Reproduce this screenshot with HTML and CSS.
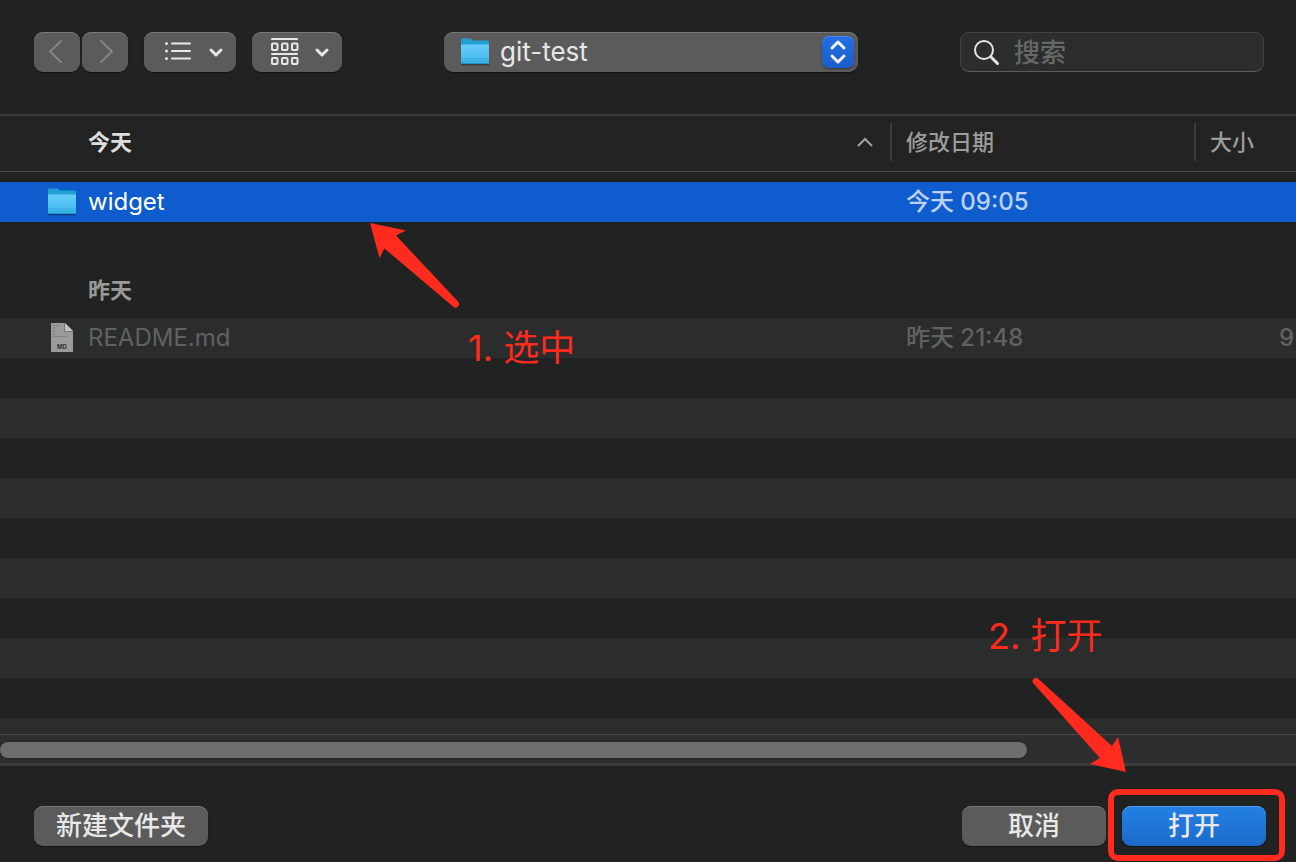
FILE: index.html
```html
<!DOCTYPE html>
<html lang="zh-CN">
<head>
<meta charset="utf-8">
<title>git-test</title>
<link rel="stylesheet" href="styles.css">
</head>
<body>
<svg class="defs" aria-hidden="true">
  <defs>
    <linearGradient id="front" x1="0" y1="0" x2="0" y2="1"><stop offset="0" stop-color="#68cdfb"/><stop offset="1" stop-color="#3fb6ec"/></linearGradient>
    <symbol id="folder" viewBox="0 0 30 30">
      <path d="M1 27.500h28" stroke="#000" stroke-opacity=".3" stroke-width="2"/>
      <path d="M1 3a1.500 1.500 0 0 1 1.500-1.500H10c1.500 0 2 2 3.500 2h14A1.500 1.500 0 0 1 29 5v20H1z" fill="#229fd3"/>
      <path d="M1 7.500h28V25a2 2 0 0 1-2 2H3a2 2 0 0 1-2-2z" fill="url(#front)"/>
      <path d="M1 22h28M1 24.500h28" stroke="#259fd2" stroke-opacity=".6"/>
      <path d="M1.500 26.500h27" stroke="#1d8fc0"/>
    </symbol>
  </defs>
</svg>
<main class="dialog">
  <header class="toolbar">
    <div class="tools">
      <div class="nav">
        <button class="btn nav-btn" aria-label="后退" disabled><svg width="46" height="40"><path d="M27 9 16 19.500 27 30"/></svg></button>
        <button class="btn nav-btn" aria-label="前进" disabled><svg width="46" height="40"><path d="M19 9 30 19.500 19 30"/></svg></button>
      </div>
      <button class="btn view-btn" aria-label="列表显示">
        <svg width="92" height="40"><path class="thin" d="M28 11.500h18M28 19h18M28 26.500h18"/><path class="dots" d="M22.500 11.500h0M22.500 19h0M22.500 26.500h0"/><path class="chev" d="m67 18 5 5 5-5"/></svg>
      </button>
      <button class="btn group-btn" aria-label="分组方式">
        <svg width="90" height="40"><path class="thin" d="M20 7h25M20 22h25"/><g class="thin"><rect x="20" y="11.500" width="5.500" height="6.500" rx="1"/><rect x="30" y="11.500" width="5.500" height="6.500" rx="1"/><rect x="40" y="11.500" width="5.500" height="6.500" rx="1"/><rect x="20" y="26" width="5.500" height="6" rx="1"/><rect x="30" y="26" width="5.500" height="6" rx="1"/><rect x="40" y="26" width="5.500" height="6" rx="1"/></g><path class="chev" d="m65 18 5 5 5-5"/></svg>
      </button>
    </div>
    <div class="location">
      <select class="btn" aria-label="位置"><option>git-test</option></select>
      <svg class="location-folder" width="30" height="30" aria-hidden="true"><use href="#folder"/></svg>
      <svg class="stepper" width="32" height="32" aria-hidden="true"><path d="m10 12 6-6 6 6M10 20l6 6 6-6"/></svg>
    </div>
    <label class="search">
      <svg width="27" height="28" aria-hidden="true"><circle cx="10" cy="12" r="9"/><path d="m17 19 6.500 6.500"/></svg>
      <input type="text" placeholder="搜索" aria-label="搜索">
    </label>
  </header>

  <section class="list">
    <table class="files">
      <colgroup><col><col class="col-date"><col class="col-size"></colgroup>
      <thead>
        <tr>
          <th class="name-head" scope="col"><div class="sort">今天<svg width="18" height="12" aria-hidden="true"><path d="m2 10 7-7 7 7"/></svg></div></th>
          <th scope="col"><div class="divided">修改日期</div></th>
          <th scope="col"><div class="divided">大小</div></th>
        </tr>
      </thead>
      <tbody>
        <tr class="spacer"><td colspan="3"></td></tr>
        <tr class="selected">
          <td><div class="file"><svg width="30" height="30" aria-hidden="true"><use href="#folder"/></svg>widget</div></td>
          <td>今天 09:05</td><td></td>
        </tr>
        <tr class="group"><th colspan="3" scope="rowgroup">昨天</th></tr>
        <tr class="muted">
          <td><div class="file"><svg width="30" height="30" aria-hidden="true"><path d="M4 0h14l8 8v21H4z" fill="#9b9b9b"/><path d="M18 0v8h8z" fill="#c2c2c2"/><path d="M17.500 0v8.500H26" fill="none" stroke="#777"/><path d="M6 2.500h7M6 5h2M6 8h2M6 11h2M6 13.500h14" stroke="#7b7b7b" stroke-dasharray="2 1"/><text x="15" y="26" class="badge">MD</text></svg>README.md</div></td>
          <td>昨天 21:48</td><td class="size">9</td>
        </tr>
      </tbody>
    </table>
    <div class="stripes"></div>
    <div class="note note-select">
      <svg width="96" height="92" aria-hidden="true"><path d="M2 3 38 10.500 28 15.500 90 81.500a3.400 3.400 0 0 1-5 5L16.500 28.500 11.500 38z"/></svg>
      <span>1. 选中</span>
    </div>
  </section>
  <div class="track"><div class="thumb"></div></div>

  <footer class="actions">
    <button class="btn new-folder">新建文件夹</button>
    <button class="btn action">取消</button>
    <div class="open">
      <button class="btn action primary">打开</button>
      <div class="ring"></div>
      <span class="note open-label">2. 打开</span>
      <svg class="note open-arrow" width="96" height="98" aria-hidden="true"><path d="M6.500 3 80 70 86 61 94 96 58 88 68 82 1.500 7.500a3.200 3.200 0 0 1 5-4.500z"/></svg>
    </div>
  </footer>
</main>
</body>
</html>
```
FILE: styles.css
```css
* { box-sizing: border-box; }

body {
  margin: 0;
  background: #212322;
  color: #e4e4e4;
  font: 24px/38px Inter, "Noto Sans CJK SC", sans-serif;
}

svg { display: block; fill: none; flex: none; }
.defs { position: absolute; width: 0; height: 0; }

.dialog {
  display: flex;
  flex-direction: column;
  min-height: 100vh;
  overflow: hidden;
}

.toolbar {
  display: flex;
  justify-content: space-between;
  padding: 32px 32px 42px 34px;
}
.tools { display: flex; gap: 16px; }
.nav { display: flex; gap: 2px; }

.btn {
  display: block;
  height: 40px;
  padding: 0;
  border: 0;
  border-radius: 9px;
  background: #5b5b5b;
  box-shadow: inset 0 1px #777, 0 1px 1px #151515;
  color: #e8e8e8;
  font: inherit;
  font-size: 26px;
  font-weight: 500;
  line-height: 38px;
}
.btn path, .btn g { stroke: #e8e8e8; stroke-linecap: round; stroke-linejoin: round; }
.nav-btn path { stroke: #858585; stroke-width: 2; }
.thin { stroke-width: 2; }
.dots { stroke-width: 3; }
.chev { stroke-width: 3; }

.location { position: relative; width: 414px; }
.location select {
  appearance: none;
  width: 100%;
  padding-left: 56px;
  font-weight: 400;
}
.location-folder { position: absolute; left: 16px; top: 5px; }
.stepper {
  position: absolute;
  right: 4px;
  top: 4px;
  border-radius: 7px;
  background: linear-gradient(#246fe2, #1b5ccb);
  box-shadow: inset 0 1px #4a8af0, 0 1px 2px #333;
  pointer-events: none;
}
.stepper path { stroke: #eef4ff; stroke-width: 3; stroke-linecap: round; stroke-linejoin: round; }

.search {
  display: flex;
  align-items: center;
  gap: 13px;
  width: 304px;
  height: 40px;
  padding-left: 13px;
  border: 1px solid #424443;
  border-bottom-color: #5b5d5c;
  border-radius: 9px;
  background: #2c2e2d;
}
.search svg { stroke: #e4e4e4; stroke-width: 2; stroke-linecap: round; }
.search path { stroke-width: 3; }
.search input {
  flex: 1;
  min-width: 0;
  padding: 2px 0 0;
  border: 0;
  outline: 0;
  background: none;
  color: #e4e4e4;
  font: inherit;
  font-size: 26px;
  font-weight: 500;
}
.search input::placeholder { color: #666867; opacity: 1; }

.list {
  position: relative;
  display: flex;
  flex: 1;
  flex-direction: column;
  overflow: hidden;
}
.files {
  width: 126%;
  table-layout: fixed;
  border-collapse: separate;
  border-spacing: 0;
}
.col-date { width: 304px; }
.col-size { width: 434px; }
.files th, .files td { padding: 0; text-align: left; white-space: nowrap; }
.files td + td { padding-left: 11px; font-weight: 500; }
.files thead th {
  height: 58px;
  padding-bottom: 4px;
  border-top: 2px solid #3a3c3b;
  border-bottom: 1px solid #4b4b4b;
  background: #232323;
  color: #9c9c9c;
  font-size: 22px;
  font-weight: 500;
}
.files .name-head { color: #dedede; font-weight: 700; }
.sort {
  display: flex;
  align-items: center;
  justify-content: space-between;
  padding: 0 21px 0 88px;
}
.sort svg { stroke: #a5a5a5; stroke-width: 2; }
.divided { margin-left: -5px; padding-left: 14px; border-left: 2px solid #3c3c3c; }
.files .spacer td { height: 10px; }
.files tbody tr { height: 40px; }
.files .spacer { height: 10px; }
.selected { background: #0f5ccf; color: #fff; }
.selected td + td { color: #bcd1f3; }
.file { display: flex; align-items: center; gap: 11px; padding-left: 47px; }
.files .group th {
  height: 96px;
  padding: 40px 0 0 88px;
  color: #999;
  font-size: 22px;
}
.muted { background: #2b2d2c; color: #606261; }
.files .muted .size { padding-left: 80px; }
.badge { fill: #333; font-size: 6px; font-weight: 700; text-anchor: middle; }
.stripes {
  flex: 1;
  background: repeating-linear-gradient(#212322 0 40px, #2b2d2c 40px 80px);
}

.track {
  height: 32px;
  padding: 7px 0;
  border-top: 1px solid #484848;
  border-bottom: 3px solid #3a3a3a;
  background: #2e2e2e;
}
.thumb {
  width: 79.25%;
  height: 16px;
  border-radius: 8px;
  background: #6e6e6e;
  box-shadow: 0 0 2px #181818;
}

.actions {
  display: flex;
  gap: 16px;
  padding: 40px 30px 16px 34px;
}
.new-folder { margin-right: auto; padding: 0 22px; }
.action { width: 144px; }
.primary { background: linear-gradient(#2380e4, #1c6bca); box-shadow: inset 0 1px #4e9df2, 0 1px 1px #151515; }
.open { position: relative; }
.ring {
  position: absolute;
  inset: -17px -19px -15px -14px;
  border: 6px solid #ff2b1e;
  border-radius: 10px;
  pointer-events: none;
}

.note {
  position: absolute;
  color: #ff2b1e;
  font-size: 36px;
  line-height: 52px;
  white-space: nowrap;
  pointer-events: none;
}
.note path { fill: #ff2b1e; }
.note-select { left: 368px; top: 106px; }
.note-select span { display: block; padding: 10px 0 0 100px; }
.open-label { left: -134px; bottom: 184px; }
.open-arrow { left: -90px; bottom: 72px; }
```
